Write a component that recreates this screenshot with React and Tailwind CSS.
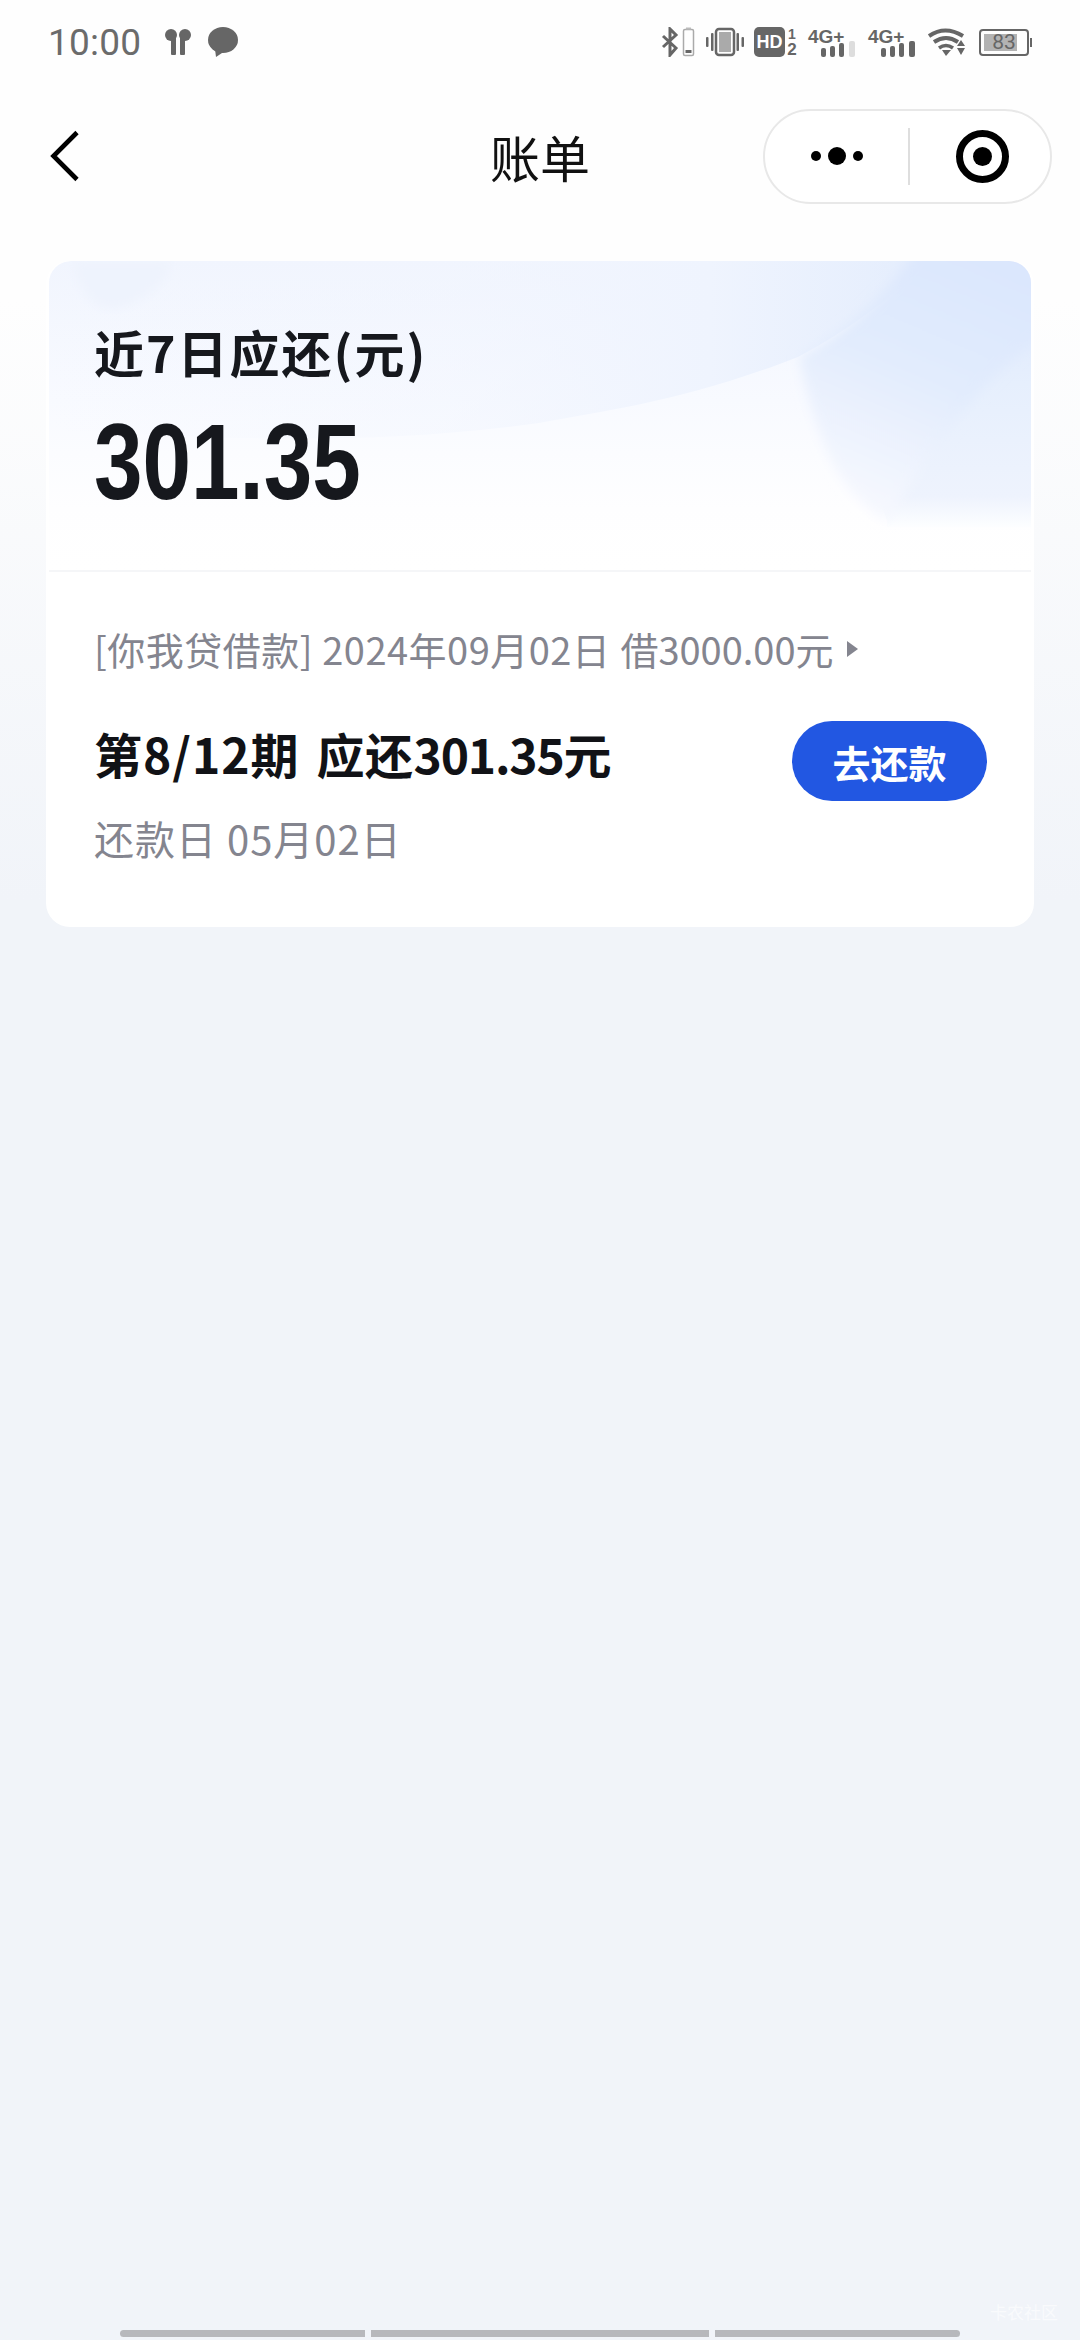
import { useId } from "react";

const cjk = "font-['Noto_Sans_CJK_SC','Roboto',sans-serif]";
const iconText = "font-['Liberation_Sans',sans-serif] font-bold leading-none text-[#666]";

// status bar glyphs, all in the same grey
const AirpodsIcon = () => (
  <svg width="26" height="26" viewBox="0 0 26 26" fill="#666">
    <circle cx="6" cy="6" r="6" />
    <rect x="6" y="5" width="5" height="21" rx="1" />
    <circle cx="20" cy="6" r="6" />
    <rect x="15" y="5" width="5" height="21" rx="1" />
  </svg>
);

const ChatIcon = () => (
  <svg width="30" height="30" viewBox="0 0 30 30" fill="#666">
    <ellipse cx="15" cy="13" rx="15" ry="13" />
    <path d="M7 22 L8 30 L17 24 Z" />
  </svg>
);

const BluetoothIcon = () => (
  <svg width="34" height="30" viewBox="0 0 34 30" fill="none">
    <path d="M2 9 L15 21 L9 28 V2 L15 8 L2 20" stroke="#666" strokeWidth="3" />
    <rect x="22.5" y="2.5" width="10" height="26" rx="1.5" stroke="#aaa" strokeWidth="1.5" />
    <rect x="25" y="0.5" width="5" height="2" fill="#bbb" />
    <rect x="24.5" y="23" width="6" height="3" fill="#666" />
  </svg>
);

const VibrateIcon = () => (
  <svg width="38" height="30" viewBox="0 0 38 30" fill="none">
    <rect x="10" y="2" width="18" height="26" rx="3" stroke="#666" strokeWidth="2.5" />
    <rect x="13" y="5" width="12" height="20" fill="#aaa" />
    <rect x="0" y="10" width="2.5" height="10" rx="1" fill="#666" />
    <rect x="5" y="6" width="2.5" height="18" rx="1" fill="#666" />
    <rect x="30.5" y="6" width="2.5" height="18" rx="1" fill="#666" />
    <rect x="35.5" y="10" width="2.5" height="10" rx="1" fill="#666" />
  </svg>
);

const HdIcon = () => (
  <div className="flex items-center gap-[2px]">
    <div className="w-[31px] h-[30px] rounded-[5px] bg-[#666] flex items-center justify-center">
      <span className="font-['Liberation_Sans',sans-serif] font-bold text-[18px] leading-none text-white">HD</span>
    </div>
    <div className="w-[10px] h-[30px] flex flex-col items-center justify-between">
      <span className={`${iconText} text-[14px]`}>1</span>
      <span className={`${iconText} text-[17px]`}>2</span>
    </div>
  </div>
);

const SignalIcon = ({ lastBar = "#666" }) => (
  <div className="w-[48px] h-[30px] flex flex-col justify-between">
    <span className={`${iconText} text-[19px] h-[14px]`}>4G+</span>
    <div className="h-[16px] pl-[13px] flex items-end gap-[4px]">
      <div className="w-[5px] h-[9px] rounded-[2px] bg-[#666]" />
      <div className="w-[5px] h-[11px] rounded-[2px] bg-[#666]" />
      <div className="w-[5px] h-[14px] rounded-[2px] bg-[#666]" />
      <div className="w-[6px] h-[16px] ml-[1px] rounded-[2px]" style={{ backgroundColor: lastBar }} />
    </div>
  </div>
);

const WifiIcon = () => (
  <svg width="38" height="28" viewBox="0 0 38 28" fill="none">
    <path d="M1 8 Q17 -3 35 8" stroke="#666" strokeWidth="4" />
    <path d="M6 14 Q18 6 30 14" stroke="#666" strokeWidth="4" />
    <path d="M11 20 Q18 15 25 20" stroke="#666" strokeWidth="3.5" />
    <path d="M14 22 H23 L18 28 Z" fill="#666" />
    <path d="M33 12 L37 18 H29 Z M29 20 H37 L33 27 Z" fill="#666" />
  </svg>
);

const BatteryIcon = () => (
  <div className="flex items-center">
    <div className="relative w-[50px] h-[27px] rounded-[4px] border-[2px] border-[#666] p-[3px]">
      <div className="h-full w-[83%] bg-[#b3b3b3]" />
      <span className="absolute inset-0 flex items-center justify-center font-['Roboto',sans-serif] text-[21px] leading-none text-[#666]">
        83
      </span>
    </div>
    <div className="w-[2px] h-[9px] ml-[1px] bg-[#666]" />
  </div>
);

const StatusBar = () => (
  <div className="h-[84px] pl-[48px] pr-[48px] flex items-center justify-between">
    <div className="flex items-center">
      <span className="font-['Roboto',sans-serif] text-[37px] leading-none text-[#6b6b6b] tracking-[0.2px]">
        10:00
      </span>
      <div className="ml-[24px]">
        <AirpodsIcon />
      </div>
      <div className="ml-[17px]">
        <ChatIcon />
      </div>
    </div>
    <div className="flex items-center">
      <BluetoothIcon />
      <div className="ml-[11px]">
        <VibrateIcon />
      </div>
      <div className="ml-[10px]">
        <HdIcon />
      </div>
      <div className="ml-[11px]">
        <SignalIcon lastBar="#ddd" />
      </div>
      <div className="ml-[12px]">
        <SignalIcon />
      </div>
      <div className="ml-[12px]">
        <WifiIcon />
      </div>
      <div className="ml-[13px]">
        <BatteryIcon />
      </div>
    </div>
  </div>
);

const Capsule = () => (
  <div className="w-[289px] h-[95px] rounded-full border-[2px] border-[#e8e8e8] bg-white flex items-center">
    <div className="flex-1 flex items-center justify-center gap-[7px]">
      <span className="w-[10px] h-[10px] rounded-full bg-black" />
      <span className="w-[18px] h-[18px] rounded-full bg-black" />
      <span className="w-[10px] h-[10px] rounded-full bg-black" />
    </div>
    <div className="w-[2px] h-[57px] bg-[#dedede]" />
    <div className="w-[140px] pl-[4px] flex items-center justify-center">
      <div className="w-[53px] h-[53px] rounded-full border-[7px] border-black flex items-center justify-center">
        <span className="w-[19px] h-[19px] rounded-full bg-black" />
      </div>
    </div>
  </div>
);

const NavBar = () => (
  <div className="relative h-[144px] pl-[50px] pr-[28px] flex items-center justify-between">
    <svg width="30" height="52" viewBox="0 0 30 52" fill="none">
      <path d="M27 2.5 L3.5 26 L27 49.5" stroke="#000" strokeWidth="4.6" />
    </svg>
    <span className={`absolute left-0 right-0 text-center ${cjk} text-[50px] leading-none text-[#111]`}>
      账单
    </span>
    <div className="relative">
      <Capsule />
    </div>
  </div>
);

// soft blue folds behind the card's summary
const HeaderArt = () => {
  const id = useId();
  const base = `${id}base`;
  const deep = `${id}deep`;
  const pale = `${id}pale`;
  const wave = `${id}wave`;
  const soft = `${id}soft`;
  return (
    <svg className="absolute inset-0 w-full h-full" viewBox="0 0 982 311" preserveAspectRatio="none">
      <defs>
        <linearGradient id={base} x1="0" y1="0" x2="0" y2="1">
          <stop offset="0" stopColor="#f1f5fe" />
          <stop offset="0.45" stopColor="#f8faff" />
          <stop offset="0.8" stopColor="#fefeff" />
          <stop offset="1" stopColor="#ffffff" />
        </linearGradient>
        <linearGradient id={deep} x1="0.8" y1="0" x2="0.4" y2="1">
          <stop offset="0" stopColor="#d9e5fd" />
          <stop offset="0.55" stopColor="#e2ecfd" />
          <stop offset="1" stopColor="#f6f8fe" />
        </linearGradient>
        <linearGradient id={pale} x1="0" y1="0" x2="0" y2="1">
          <stop offset="0" stopColor="#e0eafd" />
          <stop offset="0.3" stopColor="#e6effd" />
          <stop offset="0.85" stopColor="#eef3fd" />
          <stop offset="1" stopColor="#fdfeff" />
        </linearGradient>
        <linearGradient id={wave} x1="0" y1="0" x2="1" y2="0">
          <stop offset="0" stopColor="#f1f5fe" stopOpacity="0" />
          <stop offset="0.45" stopColor="#f1f5fe" stopOpacity="0.4" />
          <stop offset="0.75" stopColor="#eff4fe" />
          <stop offset="1" stopColor="#e4edfd" />
        </linearGradient>
        <filter id={soft} x="-10%" y="-10%" width="120%" height="120%">
          <feGaussianBlur stdDeviation="6" />
        </filter>
      </defs>
      <path d="M0 0 H982 V311 H0 Z" fill={`url(#${base})`} />
      <path d="M0 0 H880 C830 50 780 80 750 96 C640 140 560 150 490 163 C300 190 120 175 0 170 Z" fill={`url(#${wave})`} />
      <path d="M24 0 H122 C120 28 80 48 60 48 C40 46 26 20 24 0 Z" fill="#eef3fd" filter={`url(#${soft})`} />
      <path d="M982 60 V268 H838 V262 C820 200 800 150 870 100 Z" fill={`url(#${pale})`} />
      <path
        d="M880 -30 H1020 V60 L982 84 C920 130 880 200 838 262 C800 240 770 200 750 96 C780 80 830 50 880 -30 Z"
        fill={`url(#${deep})`}
        filter={`url(#${soft})`}
      />
    </svg>
  );
};

const BillCard = () => (
  <div className="mx-[46px] mt-[33px] rounded-[24px] bg-white overflow-hidden">
    <div className="relative mx-[3px] h-[311px] rounded-t-[22px] overflow-hidden border-b-[2px] border-[#f5f6f8]">
      <HeaderArt />
      <div className="relative pl-[45px] pt-[60px]">
        <p className={`${cjk} text-[50px] leading-[60px] font-bold tracking-[2px] text-[#16181d]`}>近7日应还(元)</p>
        <p className="mt-[29px] w-fit origin-left scale-x-[0.815] font-['Liberation_Sans',sans-serif] font-bold text-[107px] leading-[104px] text-[#16181d]">
          301.35
        </p>
      </div>
    </div>
    <div className="px-[48px] pt-[50px] pb-[64px]">
      <div className={`flex items-center ${cjk} text-[38px] leading-[54px] text-[#84858f]`}>
        <span className="tracking-[0.5px]">[你我贷借款] 2024年09月02日 </span>
        <span className="ml-[10px]">借3000.00元</span>
        <svg className="ml-[13px]" width="11" height="16" viewBox="0 0 11 16" fill="#84858f">
          <path d="M0 0 L11 8 L0 16 Z" />
        </svg>
      </div>
      <div className="mt-[47px] flex items-start justify-between">
        <div>
          <p className={`flex ${cjk} text-[48px] leading-[60px] font-bold text-[#111216]`}>
            <span className="tracking-[1px]">第8/12期</span>
            <span className="ml-[17px] tracking-[0.5px]">应还</span>
            <span className="tracking-[-1.2px]">301.35</span>
            <span>元</span>
          </p>
          <p className={`mt-[30px] ${cjk} text-[40px] leading-[50px] tracking-[1px] text-[#84858f]`}>还款日 05月02日</p>
        </div>
        <button className={`mt-[-2px] mr-[-1px] w-[195px] h-[80px] rounded-full bg-[#2257e2] ${cjk} text-[38px] font-bold text-white`}>
          去还款
        </button>
      </div>
    </div>
  </div>
);

const GestureBar = () => (
  <div className="mt-auto pb-[3px] pl-[120px] pr-[120px] flex gap-[6px]">
    <div className="w-[245px] h-[7px] rounded-l-full bg-[#b7b8bc]" />
    <div className="w-[338px] h-[7px] bg-[#b7b8bc]" />
    <div className="flex-1 h-[7px] rounded-r-full bg-[#b7b8bc]" />
  </div>
);

export default function App() {
  return (
    <div className="relative w-[1080px] h-[2340px] flex flex-col overflow-hidden bg-[linear-gradient(to_bottom,#fefefe_0px,#fefefe_300px,#f1f4f9_900px,#f1f4f9_100%)]">
      <StatusBar />
      <NavBar />
      <BillCard />
      <GestureBar />
      <span className={`absolute right-[22px] bottom-[20px] ${cjk} text-[17px] leading-none text-white/60`}>
        卡农社区
      </span>
    </div>
  );
}
